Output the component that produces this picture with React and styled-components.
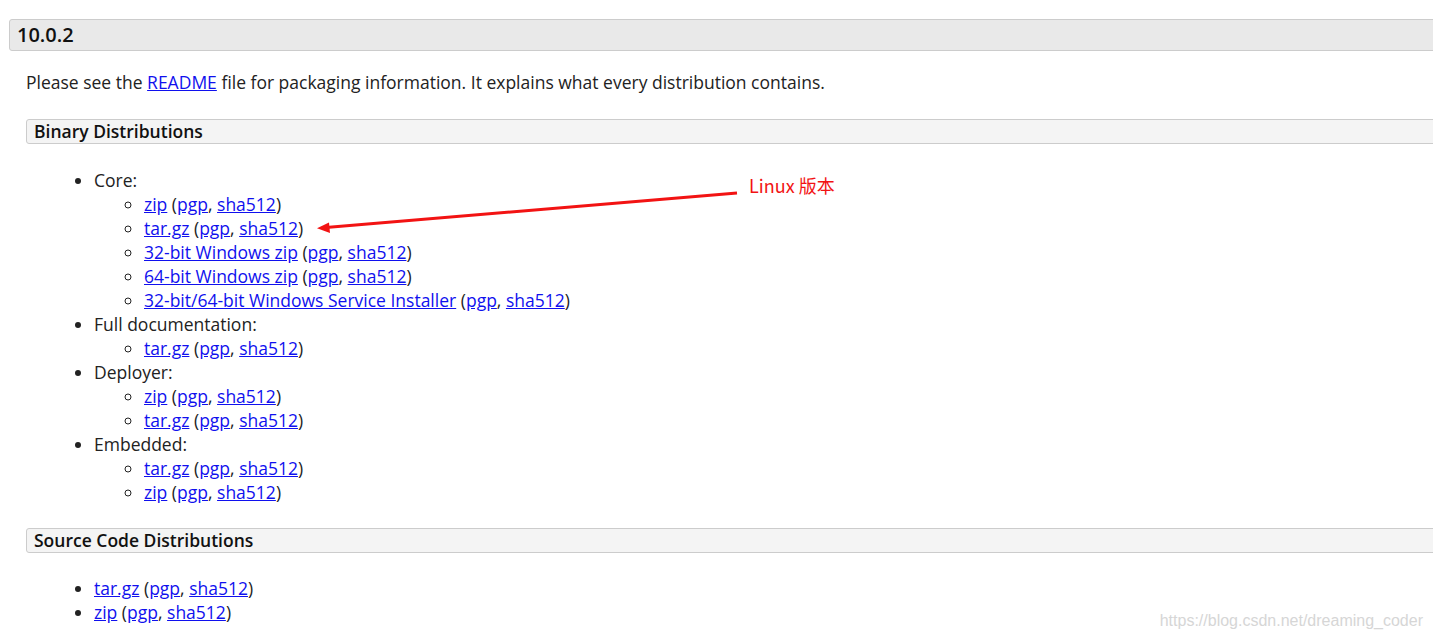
import React from 'react';
import styled, { createGlobalStyle } from 'styled-components';

const GlobalStyle = createGlobalStyle`
  html, body {
    margin: 0;
    padding: 0;
    background: #fff;
    overflow: hidden;
  }
  body {
    font-family: 'Open Sans', 'Noto Sans', sans-serif;
    font-size: 17.5px;
    color: #222;
  }
`;

const Page = styled.div`
  position: relative;
  height: 638px;
  padding: 19px 0 0 9px;
  box-sizing: border-box;
`;

const VersionHeading = styled.h2`
  margin: 0 -20px 0 0;
  padding: 1px 7px 0;
  height: 29px;
  line-height: 28px;
  font-size: 20px;
  font-weight: 600;
  color: #111;
  background: #e9e9e9;
  border: 1px solid #ccc;
  border-radius: 3px;
`;

const Body = styled.div`
  padding-left: 17px;
`;

const Intro = styled.p`
  margin: 19px 0 25px;
  line-height: 24px;
`;

const SectionHeading = styled.h3`
  margin: 0 -20px 0 0;
  padding: 0 7px;
  height: 23px;
  line-height: 23px;
  font-size: 17.5px;
  font-weight: 600;
  color: #111;
  background: #f4f4f4;
  border: 1px solid #ccc;
  border-radius: 3px;
`;

const List = styled.ul`
  margin: ${p => p.$top}px 0 ${p => p.$bottom || 0}px;
  padding-left: 68px;
  list-style: disc;
  line-height: 24px;
`;

const SubList = styled.ul`
  margin: 0;
  padding-left: 50px;
  list-style: circle;
`;

const Link = styled.a`
  color: #1010ee;
  text-decoration: underline;
`;

const Note = styled.div`
  position: absolute;
  left: 749px;
  top: 172px;
  color: #f21313;
  font-family: 'Noto Sans CJK SC', 'Noto Sans', sans-serif;
  font-size: 18px;
  line-height: 26px;
`;

const Arrow = styled.svg`
  position: absolute;
  left: 0;
  top: 0;
  pointer-events: none;
`;

const Watermark = styled.div`
  position: absolute;
  right: 10px;
  bottom: 8px;
  color: #d6d6d6;
  font-family: 'Liberation Sans', Arial, sans-serif;
  font-size: 16px;
`;

const Files = ({ name }) => (
  <>
    <Link href="#">{name}</Link> (<Link href="#">pgp</Link>, <Link href="#">sha512</Link>)
  </>
);

const groups = [
  {
    title: 'Core:',
    files: [
      'zip',
      'tar.gz',
      '32-bit Windows zip',
      '64-bit Windows zip',
      '32-bit/64-bit Windows Service Installer',
    ],
  },
  { title: 'Full documentation:', files: ['tar.gz'] },
  { title: 'Deployer:', files: ['zip', 'tar.gz'] },
  { title: 'Embedded:', files: ['tar.gz', 'zip'] },
];

export default function App() {
  return (
    <Page>
      <GlobalStyle />
      <VersionHeading>10.0.2</VersionHeading>
      <Body>
        <Intro>
          Please see the <Link href="#">README</Link> file for packaging information. It explains
          what every distribution contains.
        </Intro>
        <SectionHeading>Binary Distributions</SectionHeading>
        <List $top={24} $bottom={24}>
          {groups.map(g => (
            <li key={g.title}>
              {g.title}
              <SubList>
                {g.files.map((f, i) => (
                  <li key={i}>
                    <Files name={f} />
                  </li>
                ))}
              </SubList>
            </li>
          ))}
        </List>
        <SectionHeading>Source Code Distributions</SectionHeading>
        <List $top={23}>
          <li>
            <Files name="tar.gz" />
          </li>
          <li>
            <Files name="zip" />
          </li>
        </List>
      </Body>
      <Note>Linux 版本</Note>
      <Arrow width="1433" height="638">
        <line x1="737" y1="193" x2="326" y2="227.5" stroke="#f21313" strokeWidth="3" />
        <polygon points="317,228.3 329,222.6 330,233" fill="#f21313" />
      </Arrow>
      <Watermark>https://blog.csdn.net/dreaming_coder</Watermark>
    </Page>
  );
}
